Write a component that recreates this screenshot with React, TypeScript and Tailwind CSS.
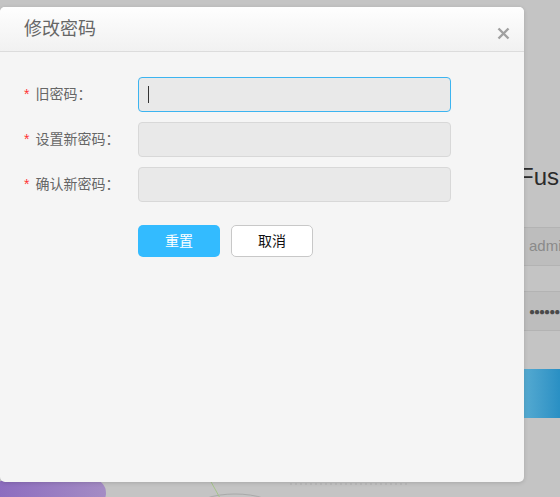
import React from 'react'

// 背景登录页(被遮罩盖住的部分)
function LoginBackdrop() {
  return (
    <div className="relative h-[497px] w-[560px] overflow-hidden bg-[#c4c4c4]">
      <div className="flex flex-col pl-[519px] pt-[162px]">
        <div className="text-[24px] leading-[30px] text-[#2b2b2b] whitespace-nowrap">Fus</div>
        <div className="mt-[35px] flex h-[39px] w-[80px] items-center overflow-hidden rounded-[4px] border border-[#b3b3b3] bg-[#bdbdbd] pl-[9px] text-[15px] text-[#8a8a8a]">
          admin
        </div>
        <div className="mt-[25px] flex h-[40px] w-[80px] items-center overflow-hidden rounded-[4px] border border-[#b3b3b3] bg-[#bdbdbd] pl-[9px] text-[10px] tracking-[-1px] text-[#4a4a4a]">
          ●●●●●●
        </div>
        <div className="mt-[38px] h-[49px] w-[80px] rounded-[4px] bg-gradient-to-r from-[#5aaed3] via-[#2a90c4] to-[#2388bd]" />
      </div>
      <div className="absolute bottom-[-10px] left-[-6px] h-[28px] w-[112px] rounded-full bg-gradient-to-r from-[#8c6bbf] to-[#a48cc4]" />
      <svg className="absolute left-[190px] top-[478px]" width="220" height="40" viewBox="0 0 220 40">
        <ellipse cx="45" cy="30" rx="40" ry="14" fill="none" stroke="#a9a9a9" />
        <path d="M20 2 L30 20" stroke="#a6c48a" strokeWidth="1" />
        <path d="M100 6 H220" stroke="#b0b0b0" strokeDasharray="2 3" />
      </svg>
    </div>
  )
}

function Field({ label, focused }: { label: string; focused?: boolean }) {
  return (
    <div className="flex items-center">
      <div className="flex w-[114px] items-center text-[14px] text-[#666]">
        <span className="mr-[6px] text-[#f33]">*</span>
        <span>{label}：</span>
      </div>
      <div
        className={
          focused
            ? 'flex h-[35px] w-[313px] items-center rounded-[4px] border border-[#3cb4f0] bg-[#e9e9e9] pl-[9px]'
            : 'h-[35px] w-[313px] rounded-[4px] border border-[#d8d8d8] bg-[#e9e9e9]'
        }
      >
        {focused && <span className="h-[17px] w-px bg-[#333]" />}
      </div>
    </div>
  )
}

export default function App() {
  return (
    <div
      className="relative h-[497px] w-[560px] overflow-hidden"
      style={{ fontFamily: '"Liberation Sans", "Noto Sans CJK SC", sans-serif' }}
    >
      <LoginBackdrop />

      <div className="absolute left-0 top-[7px] flex h-[475px] w-[524px] flex-col overflow-hidden rounded-[5px] bg-[#f5f5f5] shadow-[0_1px_4px_rgba(0,0,0,0.15)]">
        <div className="flex h-[45px] shrink-0 items-center justify-between border-b border-[#dcdcdc] bg-gradient-to-b from-[#fefefe] to-[#f1f1f1] pl-[24px] pr-[14px]">
          <span className="text-[18px] text-[#666]">修改密码</span>
          <svg width="13" height="13" viewBox="0 0 13 13" className="mt-[8px]">
            <path d="M1.5 1.5 L11.5 11.5 M11.5 1.5 L1.5 11.5" stroke="#a0a0a0" strokeWidth="2.4" />
          </svg>
        </div>

        <div className="flex flex-col gap-[10px] pl-[24px] pt-[25px]">
          <Field label="旧密码" focused />
          <Field label="设置新密码" />
          <Field label="确认新密码" />
          <div className="mt-[13px] flex gap-[11px] pl-[114px]">
            <button className="h-[32px] w-[82px] rounded-[5px] bg-[#33bbff] text-[14px] text-white">重置</button>
            <button className="h-[32px] w-[82px] rounded-[5px] border border-[#c8c8c8] bg-white text-[14px] text-[#111]">
              取消
            </button>
          </div>
        </div>
      </div>
    </div>
  )
}
